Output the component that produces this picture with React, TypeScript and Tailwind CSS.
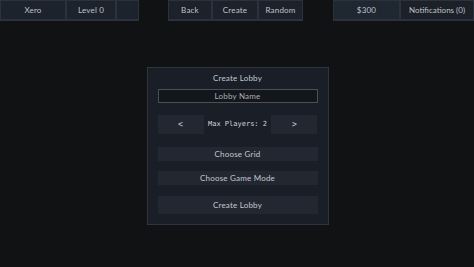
import React, { useState } from 'react';

const cell = "flex items-center justify-center border border-[#2a323d] text-[8px] text-[#bcc2ca]";
const btn = "w-full flex items-center justify-center bg-[#222831] text-[8px] text-[#c3c8cf]";
const mono = { fontFamily: '"DejaVu Sans Mono", monospace' };

const App = () => {
  const [players, setPlayers] = useState(2);
  const [lobbyName, setLobbyName] = useState('');

  return (
    <div className="w-[474px] h-[267px] bg-[#111213] relative overflow-hidden tracking-[0.2px]" style={{ fontFamily: 'Lato, "DejaVu Sans", sans-serif' }}>
      {/* top bar */}
      <div className="flex items-start h-[21px]">
        <div className="flex h-[21px] w-[139px] bg-[#1d232c] border-b border-[#2a323d]">
          <div className={cell + " w-[66px]"}>Xero</div>
          <div className={cell + " w-[50px]"}>Level 0</div>
          <div className={cell + " flex-1"}></div>
        </div>
        <div className="flex h-[21px] w-[135px] ml-[29px] bg-[#1d222a] border-b border-[#2a323d]">
          <div className={cell + " w-[44px]"}>Back</div>
          <div className={cell + " w-[46px]"}>Create</div>
          <div className={cell + " flex-1"}>Random</div>
        </div>
        <div className="flex h-[21px] ml-auto w-[141px] bg-[#1c2027] border-b border-[#2a323d]">
          <div className={cell + " w-[67px] bg-[#1f2731]"}>$300</div>
          <div className={cell + " flex-1 tracking-normal"}>Notifications (0)</div>
        </div>
      </div>

      {/* lobby panel */}
      <div className="flex justify-center mt-[46px] pl-[1px]">
        <div className="w-[182px] h-[158px] bg-[#1a1f27] border border-[#2d3540] flex flex-col items-center px-[10px]">
          <div className="text-[8px] text-[#c3c8cf] mt-[4px] h-[12px] leading-[12px]">Create Lobby</div>
          <input
            value={lobbyName}
            onChange={(e) => setLobbyName(e.target.value)}
            placeholder="Lobby Name"
            className="mt-[5px] w-full h-[14px] bg-[#13161b] border border-[#4a5058] text-center text-[8px] text-[#c3c8cf] placeholder:text-[#a9afb7] outline-none"
          />
          <div className="mt-[12px] w-full flex items-center justify-between h-[19px]">
            <button onClick={() => setPlayers(Math.max(2, players - 1))} className="w-[46px] h-full bg-[#222831] text-[8px] text-[#c3c8cf]" style={mono}>&lt;</button>
            <div className="text-[7px] text-[#cfd3d9] tracking-normal" style={mono}>Max Players: {players}</div>
            <button onClick={() => setPlayers(Math.min(8, players + 1))} className="w-[46px] h-full bg-[#222831] text-[8px] text-[#c3c8cf]" style={mono}>&gt;</button>
          </div>
          <button className={btn + " mt-[13px] h-[14px]"}>Choose Grid</button>
          <button className={btn + " mt-[10px] h-[14px]"}>Choose Game Mode</button>
          <button className={btn + " mt-[11px] h-[18px]"}>Create Lobby</button>
        </div>
      </div>
    </div>
  );
};

export default App;
